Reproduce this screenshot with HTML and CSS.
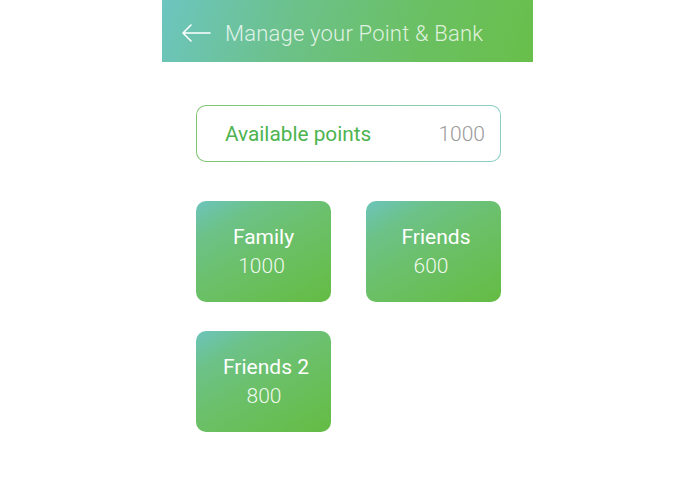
FILE: index.html
```html
<!DOCTYPE html>
<html>
<head>
<meta charset="utf-8">
<link rel="stylesheet" href="styles.css">
</head>
<body>
<div class="app">
  <header class="topbar">
    <svg class="back" width="30" height="20" viewBox="0 0 30 20">
      <path d="M29 10 H2 M10 2 L2 10 L10 18" fill="none" stroke="#fff" stroke-width="1.6" stroke-linecap="round" stroke-linejoin="round"/>
    </svg>
    <h1 class="title">Manage your Point &amp; Bank</h1>
  </header>
  <main class="content">
    <div class="points">
      <span class="points-label">Available points</span>
      <span class="points-value">1000</span>
    </div>
    <div class="grid">
      <div class="card"><div class="card-name">Family</div><div class="card-num">1000</div></div>
      <div class="card card-r"><div class="card-name">Friends</div><div class="card-num shift">600</div></div>
      <div class="card card-r"><div class="card-name">Friends 2</div><div class="card-num">800</div></div>
    </div>
  </main>
</div>
</body>
</html>
```
FILE: styles.css
```css
html, body { margin: 0; padding: 0; background: #fff; }
body { font-family: Roboto, "Liberation Sans", sans-serif; }
.app { width: 371px; margin: 0 auto; }
.topbar {
  height: 62px;
  display: flex;
  align-items: center;
  padding-left: 19px;
  padding-top: 4px;
  box-sizing: border-box;
  background: linear-gradient(110deg, #6cc5c0 0%, #6cc18a 35%, #6ac060 70%, #69bf4a 100%);
}
.title {
  margin: 0 0 0 14px;
  font-weight: 300;
  font-size: 22px;
  color: rgba(255,255,255,0.8);
  letter-spacing: 0.2px;
}
.content { padding: 43px 32px 0 34px; }
.points {
  height: 55px;
  border: 1px solid transparent;
  border-radius: 10px;
  background: linear-gradient(#fff, #fff) padding-box,
              linear-gradient(to right, #7fc56f, #8ccfc6) border-box;
  display: flex;
  align-items: center;
  justify-content: space-between;
  padding: 0 15px 0 28px;
}
.points-label { color: #4db44f; font-size: 20.8px; }
.points-value { color: #9a9a9a; font-size: 21px; font-weight: 300; }
.grid {
  margin-top: 39px;
  display: grid;
  grid-template-columns: 135px 135px;
  column-gap: 35px;
  row-gap: 29px;
}
.card {
  height: 101px;
  border-radius: 10px;
  background: linear-gradient(150deg, #6cc4bc 0%, #6cc288 22%, #6bc06a 50%, #67be52 80%, #64bc44 100%);
  display: flex;
  flex-direction: column;
  align-items: center;
  justify-content: center;
  color: #fff;
  font-size: 21px;
  line-height: 29px;
}
.card-r { padding-left: 5px; }
.card-name { font-weight: 400; }
.card-num { font-weight: 300; color: rgba(255,255,255,0.92); margin-right: 4px; }
.card-num.shift { margin-right: 10px; }
```
